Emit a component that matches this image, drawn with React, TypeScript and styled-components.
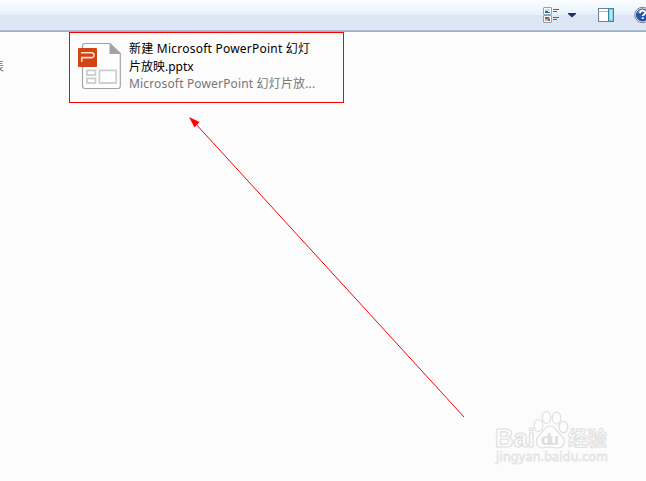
import React from 'react';
import styled, { createGlobalStyle } from 'styled-components';

const GlobalStyle = createGlobalStyle`
  * {
    box-sizing: border-box;
  }

  body {
    background: #fcfcfc;
    margin: 0;
    overflow: hidden;
  }
`;

const Window = styled.div`
  background: #fcfcfc;
  display: flex;
  flex-direction: column;
  font-family: 'Noto Sans', 'Noto Sans CJK SC', sans-serif;
  font-size: 12px;
  height: 481px;
  overflow: hidden;
  position: relative;
  width: 646px;
`;

const Toolbar = styled.div`
  align-items: flex-start;
  background: linear-gradient(
    #fafdff 0,
    #f5fafe 5px,
    #e6f0fa 15px,
    #dce6f4 15px,
    #dce7f5 28px,
    #e4eefa 30px,
    #b4c2d8 30px,
    #a0afc6 31px,
    #a0afc6 32px
  );
  display: flex;
  flex: none;
  height: 32px;
  justify-content: flex-end;
  padding-top: 7px;
`;

const ToolButton = styled.div<{ $width: number; $gap?: number }>`
  flex: none;
  height: 17px;
  margin-right: ${({ $gap = 0 }) => $gap}px;
  width: ${({ $width }) => $width}px;

  svg {
    display: block;
  }
`;

const HelpButton = styled(ToolButton)`
  height: 18px;
  margin-top: -1px;
  overflow: hidden;
`;

const Content = styled.div`
  align-items: flex-start;
  display: flex;
`;

const Sidebar = styled.div`
  color: #6d6d6d;
  display: flex;
  flex: none;
  justify-content: flex-end;
  line-height: 16px;
  overflow: hidden;
  padding: 27px 65px 0 0;
  width: 69px;
`;

const FileTile = styled.div`
  border: 1px solid #ff0000;
  display: flex;
  height: 71px;
  padding: 9px 0 0 7px;
  width: 275px;
`;

const FileInfo = styled.div`
  display: flex;
  flex-direction: column;
  margin-top: -2px;
  padding-left: 7px;
`;

const Line = styled.div<{ $muted?: boolean; $spacing?: number }>`
  color: ${({ $muted }) => ($muted ? '#767676' : '#000')};
  height: 17.5px;
  letter-spacing: ${({ $spacing = 0 }) => $spacing}px;
  line-height: 17px;
  white-space: nowrap;
`;

const Overlay = styled.svg`
  left: 0;
  pointer-events: none;
  position: absolute;
  top: 0;
`;

const ViewIcon = () => (
  <svg width="17" height="17" viewBox="0 0 17 17">
    <g fill="#fff" stroke="#8fa0b8">
      <rect x="0.5" y="0.5" width="8" height="7" rx="0.5" />
      <rect x="0.5" y="8.5" width="8" height="7" rx="0.5" />
    </g>
    <path fill="#bde2f5" d="M2 2h5v2H2z" />
    <path fill="#176b92" d="M2 4h3v1h2v1H2z" />
    <path fill="#4169d1" d="M2 10h2v2H2z" />
    <path fill="#d94736" d="M4 10h2v2H4z" />
    <path fill="#e6b41e" d="M2 12h3v2H2zM6 10h1v2H6z" />
    <path fill="#2b9849" d="M5 12h2v2H5z" />
    <path stroke="#53657e" d="M10 2.5h6M10 4.5h4M10 10.5h6M10 12.5h4" />
  </svg>
);

const CaretIcon = () => (
  <svg width="8" height="17" viewBox="0 0 8 17">
    <path fill="#19345f" d="M0 6h8v1L4 10.5 0 7z" />
  </svg>
);

const PaneIcon = () => (
  <svg width="17" height="17" viewBox="0 0 17 17">
    <rect x="0.5" y="1.5" width="15" height="13" fill="#fff" stroke="#6c82a0" />
    <path stroke="#a7b5c9" d="M1 4.5h9" />
    <path fill="#83d2e8" stroke="#427e9d" d="M10.5 1.5h5v13h-5z" />
    <path fill="#b2edf6" d="M12 3h2v9h-2z" />
  </svg>
);

const HelpIcon = () => (
  <svg width="18" height="18" viewBox="0 0 18 18">
    <circle cx="8.5" cy="9" r="7.7" fill="#e7e9ed" stroke="#777f8e" />
    <circle cx="8.5" cy="9" r="6" fill="#2456b5" stroke="#2a4788" />
    <path fill="#6b91da" d="M3.5 7a5.2 5.2 0 0 1 10 0q-5-2-10 0" />
    <path
      fill="none"
      stroke="#fff"
      strokeWidth="1.8"
      d="M6 7.2c0-3.4 5.2-3.1 5.2-.4 0 2-2.5 1.8-2.5 3.3M8.7 11.3v1.8"
    />
  </svg>
);

const PresentationIcon = () => (
  <svg width="45" height="49" viewBox="0 0 45 49">
    <path
      fill="#fff"
      stroke="#a0a3a8"
      strokeWidth="1.2"
      d="M8 1.5h25l10.3 10v32.5q0 2.5-2.5 2.5H8q-2.5 0-2.5-2.5V4Q5.5 1.5 8 1.5z"
    />
    <path fill="#a0a3a8" d="M32.5 1l11.2 11H32.500z" />
    <g fill="none" stroke="#cdcdcd" strokeWidth="1.8">
      <rect x="9.9" y="28.4" width="8.600" height="4.600" />
      <rect x="9.900" y="36.400" width="8.600" height="4.600" />
      <rect x="22.400" y="28.400" width="16.800" height="12.600" />
    </g>
    <rect x="1" y="6" width="19" height="19" rx="1" fill="#d24316" />
    <path
      fill="none"
      stroke="#f8dcd0"
      strokeWidth="1.6"
      d="M4 10.800h10.500q2.500 0 2.500 2.400t-2.500 2.400H4.800v4.200"
    />
  </svg>
);

const Watermark = () => (
  <g
    fill="#fdfdfd"
    stroke="#dfdfdf"
    strokeWidth="1.2"
    strokeLinejoin="round"
    fontFamily="'Liberation Sans', 'Noto Sans CJK SC', sans-serif"
    fontWeight="bold"
  >
    <text x="495" y="447" fontSize="26" textLength="40" lengthAdjust="spacingAndGlyphs">
      Bai
    </text>
    <ellipse cx="538.5" cy="425.5" rx="4.3" ry="6" />
    <ellipse cx="546.5" cy="417.5" rx="4.3" ry="6" />
    <ellipse cx="556.5" cy="418" rx="4.3" ry="6" />
    <ellipse cx="563.5" cy="427" rx="4.3" ry="5.7" />
    <path d="M550 426c-5 0-6.5 5-9.5 8-6 5-5.500 13 2 14q7-2 14 0c9 0 10-8 4-13-4-4-5-9-10.500-9z" />
    <text x="541" y="445" fontSize="17" fill="#dfdfdf" strokeWidth="0.2" textLength="18">
      du
    </text>
    <text
      x="568"
      y="446"
      fontSize="20"
      strokeWidth="1"
      textLength="39"
      lengthAdjust="spacingAndGlyphs"
    >
      经验
    </text>
    <text
      x="496"
      y="461"
      fill="#f4f4f4"
      fontFamily="'Noto Sans', sans-serif"
      fontSize="12.5"
      fontWeight="normal"
      stroke="#e4e4e4"
      strokeWidth="0.8"
      textLength="112"
    >
      jingyan.baidu.com
    </text>
  </g>
);

const App: React.FC = () => (
  <Window>
    <GlobalStyle />
    <Toolbar>
      <ToolButton $width={17} $gap={8}>
        <ViewIcon />
      </ToolButton>
      <ToolButton $width={8} $gap={22}>
        <CaretIcon />
      </ToolButton>
      <ToolButton $width={17} $gap={19}>
        <PaneIcon />
      </ToolButton>
      <HelpButton $width={12}>
        <HelpIcon />
      </HelpButton>
    </Toolbar>
    <Content>
      <Sidebar>表</Sidebar>
      <FileTile>
        <PresentationIcon />
        <FileInfo>
          <Line $spacing={0.23}>新建 Microsoft PowerPoint 幻灯</Line>
          <Line>片放映.pptx</Line>
          <Line $muted $spacing={0.16}>
            Microsoft PowerPoint 幻灯片放...
          </Line>
        </FileInfo>
      </FileTile>
    </Content>
    <Overlay width="646" height="481" viewBox="0 0 646 481">
      <path stroke="#ff0000" d="M194 122L464 417" />
      <path fill="#ff0000" d="M189 117l10.500 5-5 5.500z" />
      <Watermark />
    </Overlay>
  </Window>
);

export default App;
